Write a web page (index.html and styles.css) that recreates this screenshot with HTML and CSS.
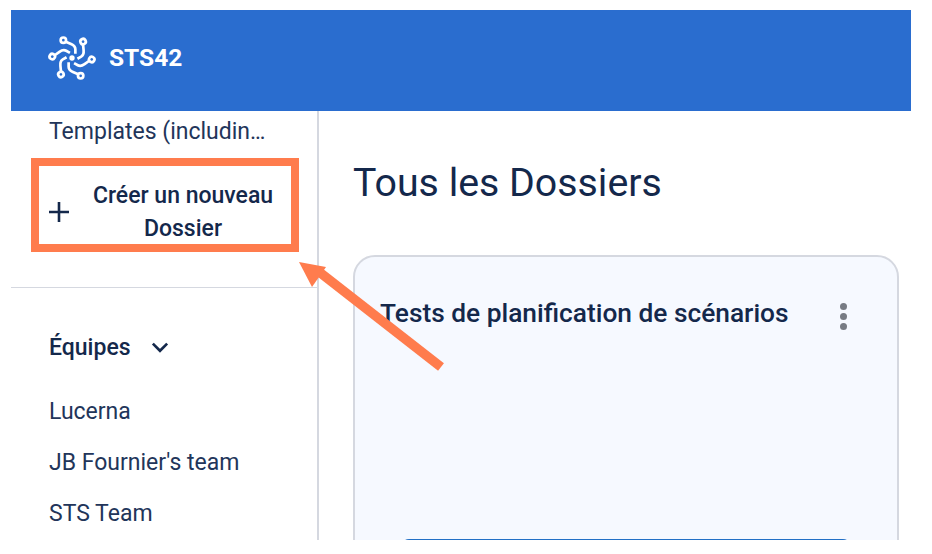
FILE: index.html
```html
<!DOCTYPE html>
<html lang="fr">

<head>
    <meta charset="UTF-8">
    <title>Tous les Dossiers</title>
    <link rel="stylesheet" href="styles.css">
</head>

<body>
    <div class="app">
        <header class="topbar">
            <svg class="logo" viewBox="-26 -26 52 52" fill="none" stroke="#fff" stroke-width="2.8">
                <defs>
                    <g id="arm">
                        <circle cx="-9" cy="-18.5" r="2.8"></circle>
                        <path d="M-6.5 -17 L-1 -14.5 Q3.5 -12.5 3.5 -9 L3.5 -4.5"></path>
                    </g>
                </defs>
                <circle cx="0" cy="0" r="2.8" fill="#fff" stroke="none"></circle>
                <use href="#arm"></use>
                <use href="#arm" transform="rotate(60)"></use>
                <use href="#arm" transform="rotate(120)"></use>
                <use href="#arm" transform="rotate(180)"></use>
                <use href="#arm" transform="rotate(240)"></use>
                <use href="#arm" transform="rotate(300)"></use>
            </svg>
            <span class="brand">STS42</span>
        </header>

        <div class="columns">
            <aside class="sidebar">
                <div class="side-link clipped">Templates (includin…</div>
                <button class="new-folder">
                    <svg class="plus" viewBox="0 0 20 20" stroke="#14284b" stroke-width="2.6">
                        <path d="M10 0 V20 M0 10 H20"></path>
                    </svg>
                    <span class="new-folder-label">Créer un nouveau Dossier</span>
                </button>
                <hr class="divider">
                <div class="teams-title">
                    Équipes
                    <svg class="chevron" viewBox="0 0 16 10" fill="none" stroke="#14284b" stroke-width="2.4">
                        <path d="M1.5 1.5 L8 8 L14.5 1.5"></path>
                    </svg>
                </div>
                <div class="side-link">Lucerna</div>
                <div class="side-link">JB Fournier's team</div>
                <div class="side-link">STS Team</div>
            </aside>

            <main class="content">
                <h1 class="page-title">Tous les Dossiers</h1>
                <section class="card">
                    <div class="card-head">
                        <h2 class="card-title">Tests de planification de scénarios</h2>
                        <div class="dots"><i></i><i></i><i></i></div>
                    </div>
                    <div class="card-button"></div>
                </section>
            </main>
        </div>

        <!-- callout arrow drawn over the page -->
        <svg class="callout" viewBox="0 0 932 554" fill="#ff7c4d">
            <path d="M441 367 L318 271" stroke="#ff7c4d" stroke-width="9.5" fill="none"></path>
            <path d="M299 262 L326 267 L312 287 Z"></path>
        </svg>
    </div>
</body>

</html>
```

FILE: styles.css
```css
* {
    box-sizing: border-box;
}

body {
    margin: 0;
    padding: 10px 21px 0 11px;
    height: 554px;
    overflow: hidden;
    background: #fff;
    font-family: Roboto, Arial, sans-serif;
    color: #14284b;
}

.app {
    height: 530px;
    overflow: hidden;
}

.topbar {
    height: 101px;
    padding: 0 0 6px 36px;
    display: flex;
    align-items: center;
    gap: 12px;
    background-color: #2a6dcf;
}

.logo {
    width: 50px;
    height: 50px;
}

.brand {
    color: #fff;
    font-size: 24.5px;
    font-weight: 700;
}

.columns {
    display: flex;
    height: 429px;
}

.sidebar {
    width: 308px;
    flex: none;
    border-right: 2px solid #d5d8e0;
}

.side-link {
    padding-left: 38px;
    height: 51px;
    line-height: 50px;
    font-size: 23px;
    white-space: nowrap;
    color: #22355a;
}

.side-link.clipped {
    height: 47px;
    line-height: 42px;
}

.new-folder {
    display: flex;
    align-items: center;
    width: 268px;
    height: 94px;
    margin-left: 20px;
    padding: 14px 0 0 10px;
    border: 8px solid #ff7c4d;
    background: #fff;
    font: 500 23px/33px Roboto, Arial, sans-serif;
    color: #14284b;
}

.plus {
    width: 20px;
    height: 20px;
    flex: none;
}

.new-folder-label {
    margin-left: 16px;
    width: 196px;
    text-align: center;
}

.divider {
    margin: 35px 0 0;
    border: 0;
    border-top: 1px solid #d5d8e0;
}

.teams-title {
    display: flex;
    align-items: center;
    gap: 20px;
    padding-left: 38px;
    margin-top: 42px;
    margin-bottom: 23px;
    height: 34px;
    font-size: 23px;
    font-weight: 500;
}

.chevron {
    width: 18px;
    height: 11px;
}

.content {
    flex: 1;
    padding: 0 12px 0 34px;
}

.page-title {
    margin: 48px 0 48px;
    font-size: 39.3px;
    line-height: 48px;
    font-weight: 400;
}

.card {
    height: 320px;
    padding: 35px 25px 0;
    background: #f6f9ff;
    border: 2px solid #d5d8e0;
    border-radius: 22px;
}

.card-head {
    display: flex;
    justify-content: space-between;
    padding-right: 25px;
}

.card-title {
    margin: 0;
    font-size: 26.3px;
    line-height: 42px;
    font-weight: 500;
}

.dots {
    display: flex;
    flex-direction: column;
    gap: 3px;
    margin-top: 11px;
}

.dots i {
    width: 7px;
    height: 7px;
    border-radius: 50%;
    background: #777b84;
}

.card-button {
    margin: 205px 21px 0;
    height: 40px;
    border-radius: 8px;
    background: #2270c6;
}

.callout {
    position: absolute;
    left: 0;
    top: 0;
    width: 932px;
    height: 554px;
    pointer-events: none;
}
```
